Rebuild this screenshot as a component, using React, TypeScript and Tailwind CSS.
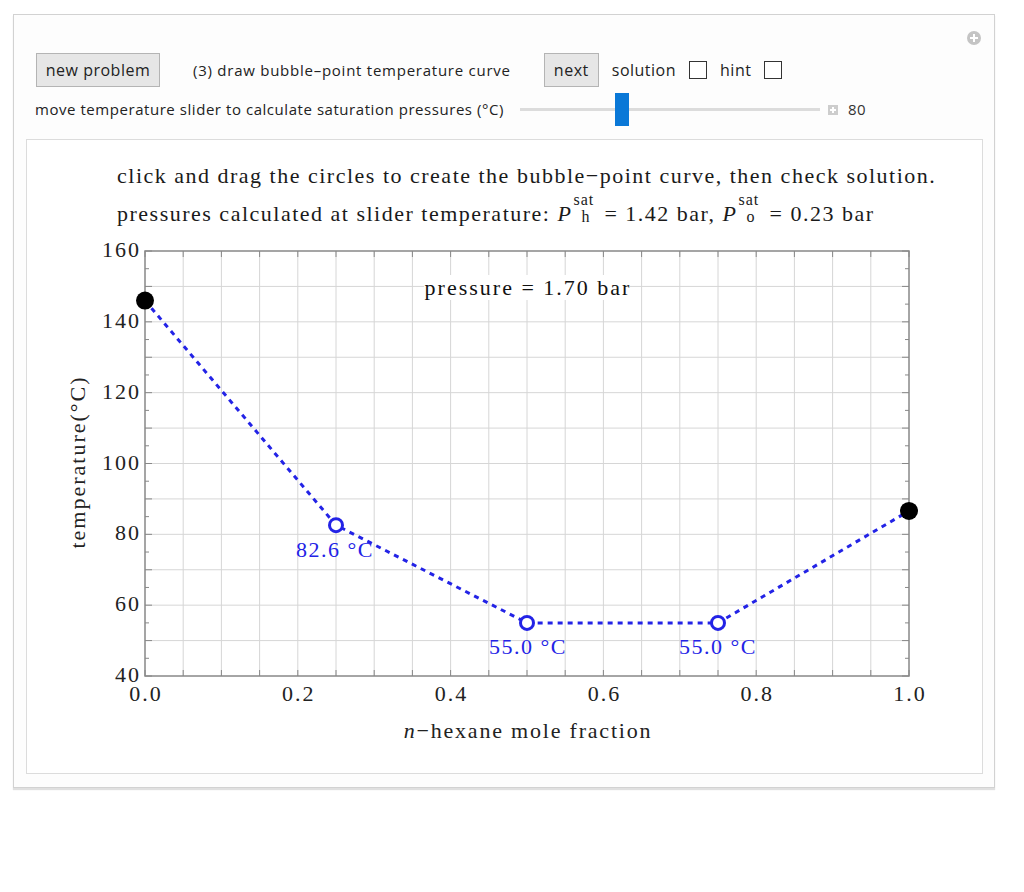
import React from 'react'

const X0 = 145
const X1 = 909
const YT = 251
const YB = 676

const sx = (f: number) => X0 + (X1 - X0) * f
const sy = (t: number) => YB - ((t - 40) * (YB - YT)) / 120

const points = [
  { f: 0, t: 146, fixed: true },
  { f: 0.25, t: 82.6, fixed: false },
  { f: 0.5, t: 55, fixed: false },
  { f: 0.75, t: 55, fixed: false },
  { f: 1, t: 86.6, fixed: true }
]

const serif = { fontFamily: '"Liberation Serif", "Times New Roman", serif' }

function Chart() {
  const vGrid = Array.from({ length: 19 }, (_, i) => (i + 1) * 0.05)
  const hGrid = Array.from({ length: 11 }, (_, i) => 50 + i * 10)
  const yTicks = Array.from({ length: 25 }, (_, i) => 40 + i * 5)
  const xTicks = Array.from({ length: 21 }, (_, i) => i * 0.05)
  const blue = '#2323e6'
  const path = points.map((p) => `${sx(p.f)},${sy(p.t)}`).join(' ')

  return (
    <svg
      width={954}
      height={540}
      viewBox="27 233 954 540"
      className="block"
      style={serif}
    >
      {vGrid.map((f) => (
        <line key={`v${f}`} x1={sx(f)} x2={sx(f)} y1={YT} y2={YB} stroke="#d6d6d6" strokeWidth={1} />
      ))}
      {hGrid.map((t) => (
        <line key={`h${t}`} x1={X0} x2={X1} y1={sy(t)} y2={sy(t)} stroke="#d6d6d6" strokeWidth={1} />
      ))}
      <rect x={X0} y={YT} width={X1 - X0} height={YB - YT} fill="none" stroke="#888" strokeWidth={1.5} />
      {yTicks.map((t) => {
        const len = t % 10 === 0 ? 7 : 4
        return (
          <g key={`yt${t}`} stroke="#888" strokeWidth={1}>
            <line x1={X0} x2={X0 + len} y1={sy(t)} y2={sy(t)} />
            <line x1={X1} x2={X1 - len} y1={sy(t)} y2={sy(t)} />
          </g>
        )
      })}
      {xTicks.map((f) => (
        <g key={`xt${f}`} stroke="#888" strokeWidth={1}>
          <line x1={sx(f)} x2={sx(f)} y1={YB} y2={YB - 6} />
          <line x1={sx(f)} x2={sx(f)} y1={YT} y2={YT + 6} />
        </g>
      ))}

      {[40, 60, 80, 100, 120, 140, 160].map((t) => (
        <text key={`yl${t}`} x={141} y={sy(t) + 6} textAnchor="end" fontSize={22} letterSpacing={2} fill="#222">
          {t}
        </text>
      ))}
      {[0, 0.2, 0.4, 0.6, 0.8, 1].map((f) => (
        <text key={`xl${f}`} x={sx(f) + 1} y={701} textAnchor="middle" fontSize={22} letterSpacing={2} fill="#222">
          {f.toFixed(1)}
        </text>
      ))}

      <text x={528} y={738} textAnchor="middle" fontSize={22} letterSpacing={1.8} fill="#222">
        <tspan fontStyle="italic">n</tspan>−hexane mole fraction
      </text>
      <text
        x={0}
        y={0}
        transform="translate(85 462) rotate(-90)"
        textAnchor="middle"
        fontSize={22}
        letterSpacing={2}
        fill="#222"
      >
        temperature(°C)
      </text>

      <rect x={424} y={275} width={206} height={25} fill="white" />
      <text x={528} y={295} textAnchor="middle" fontSize={22} letterSpacing={2} fill="#111">
        pressure = 1.70 bar
      </text>

      <polyline points={path} fill="none" stroke={blue} strokeWidth={3} strokeDasharray="5 5" />

      {points.map((p) =>
        p.fixed ? (
          <circle key={p.f} cx={sx(p.f)} cy={sy(p.t)} r={9} fill="#000" />
        ) : (
          <circle key={p.f} cx={sx(p.f)} cy={sy(p.t)} r={6.5} fill="white" stroke={blue} strokeWidth={3} />
        )
      )}

      <text x={335} y={557} textAnchor="middle" fontSize={22} letterSpacing={1.5} fill={blue}>
        82.6 °C
      </text>
      <text x={528} y={654} textAnchor="middle" fontSize={22} letterSpacing={1.5} fill={blue}>
        55.0 °C
      </text>
      <text x={718} y={654} textAnchor="middle" fontSize={22} letterSpacing={1.5} fill={blue}>
        55.0 °C
      </text>
    </svg>
  )
}

function Checkbox() {
  return <span className="inline-block h-[18px] w-[18px] border border-[#333] bg-white" />
}

function SupSub({ sub }: { sub: string }) {
  return (
    <span className="relative inline-block h-[22px] w-[32px] tracking-[1px]">
      <span className="absolute left-[1px] top-[-7px] text-[16px] leading-none">sat</span>
      <span className="absolute left-[9px] top-[10px] text-[16px] leading-none">{sub}</span>
    </span>
  )
}

export default function App() {
  return (
    <div className="min-h-[892px] w-[1024px] bg-white" style={{ fontFamily: '"Open Sans", "Noto Sans", sans-serif' }}>
      <div className="relative ml-[13px] mt-[14px] w-[982px] border border-[#d2d2d2] bg-[#fdfdfd] shadow-[0_2px_1px_rgba(0,0,0,0.12)]">
        <div className="absolute right-[13px] top-[16px] flex h-[14px] w-[14px] items-center justify-center rounded-full bg-[#c4c4c4]">
          <span className="absolute h-[2px] w-[8px] bg-white" />
          <span className="absolute h-[8px] w-[2px] bg-white" />
        </div>

        <div className="flex items-center pl-[22px] pt-[38px]">
          <button className="h-[34px] w-[124px] border border-[#b4b4b4] bg-[#e6e6e6] text-[16px] tracking-[0.5px] text-[#222]">
            new problem
          </button>
          <span className="ml-[33px] text-[15px] tracking-[0.75px] text-[#222]">(3) draw bubble–point temperature curve</span>
          <button className="ml-[33px] h-[34px] w-[55px] border border-[#b4b4b4] bg-[#e6e6e6] text-[16px] tracking-[0.5px] text-[#222]">
            next
          </button>
          <span className="ml-[13px] text-[16px] tracking-[0.5px] text-[#222]">solution</span>
          <span className="ml-[13px] flex">
            <Checkbox />
          </span>
          <span className="ml-[13px] text-[16px] tracking-[0.5px] text-[#222]">hint</span>
          <span className="ml-[13px] flex">
            <Checkbox />
          </span>
        </div>

        <div className="mt-[6px] flex h-[33px] items-center pl-[21px]">
          <span className="text-[15px] tracking-[0.55px] text-[#222]">move temperature slider to calculate saturation pressures (°C)</span>
          <div className="relative ml-[16px] flex h-[33px] w-[300px] items-center">
            <div className="h-[3px] w-full bg-[#dcdcdc]" />
            <div className="absolute left-[95px] top-0 h-[33px] w-[14px] bg-[#0a78d7]" />
          </div>
          <div className="relative ml-[8px] flex h-[10px] w-[10px] items-center justify-center bg-[#cdcdcd]">
            <span className="absolute h-[2px] w-[6px] bg-white" />
            <span className="absolute h-[6px] w-[2px] bg-white" />
          </div>
          <span className="ml-[10px] text-[15px] tracking-[0.5px] text-[#333]">80</span>
        </div>

        <div className="mb-[13px] ml-[12px] mr-[11px] mt-[13px] border border-[#dcdcdc] bg-white">
          <div className="pl-[90px] pt-[17px] text-[22px] leading-[38px] tracking-[1.5px] text-[#1a1a1a]" style={serif}>
            <div>click and drag the circles to create the bubble−point curve, then check solution.</div>
            <div>
              pressures calculated at slider temperature: <i>P</i>
              <SupSub sub="h" />= 1.42 bar, <i>P</i>
              <SupSub sub="o" />= 0.23 bar
            </div>
          </div>
          <Chart />
        </div>
      </div>
    </div>
  )
}
